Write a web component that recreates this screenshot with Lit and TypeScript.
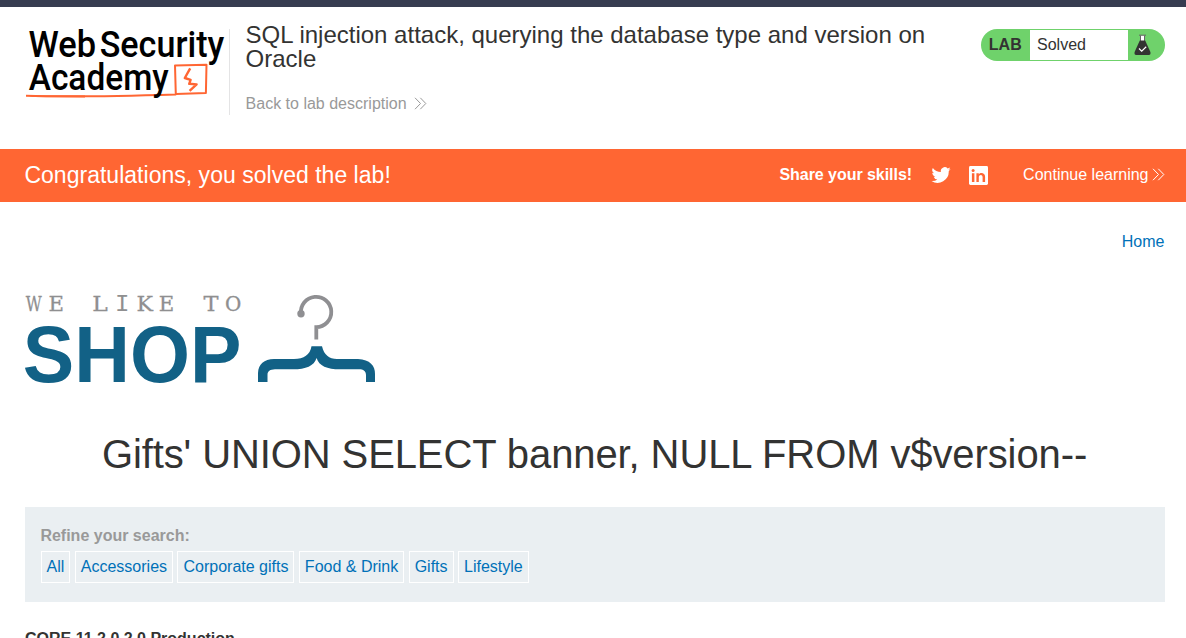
import { LitElement, html, css, svg } from "lit";
import { customElement } from "lit/decorators.js";

const CATEGORIES = ["All", "Accessories", "Corporate gifts", "Food & Drink", "Gifts", "Lifestyle"];

// letter, left edge, width
const TAGLINE: [string, number, number][] = [
  ["W", 0.7, 16], ["E", 23.5, 15.5], ["L", 67.3, 15.5], ["I", 90, 14.5],
  ["K", 111.5, 16.5], ["E", 133.8, 15.5], ["T", 178.5, 15], ["O", 200, 16.3],
];

@customElement("academy-logo")
export class AcademyLogo extends LitElement {
  static styles = css`
    :host { display: block; }
    svg { display: block; overflow: visible; }
    .word { font-family: Roboto, "Liberation Sans", sans-serif; font-size: 37.5px; font-weight: 500; fill: #000; }
    .orange { fill: none; stroke: #ff6633; stroke-linejoin: round; }
  `;
  render() {
    return html`<svg width="204" height="80" viewBox="0 0 204 80">
      <path class="orange" stroke-width="2" d="M1 70.8 C40 72 100 71 150.8 69.4 L150 40.4 L181.5 39.8 L180.9 68 L151 69" />
      <path fill="#ff6633" d="M1 70.2L60 70.5V72.4L8 72z" />
      <path class="orange" stroke-width="2.4" d="M165.2 43.3 L159.8 53 L165.6 54.9 L164.2 58.8 L171.6 59.4 L164.6 65.8" />
      <text class="word" x="3.5" y="32.3" textLength="67.5" lengthAdjust="spacingAndGlyphs">Web</text>
      <text class="word" x="74.7" y="32.3" textLength="124.5" lengthAdjust="spacingAndGlyphs">Security</text>
      <text class="word" x="3.7" y="64.8" textLength="140" lengthAdjust="spacingAndGlyphs">Academy</text>
    </svg>`;
  }
}

@customElement("shop-logo")
export class ShopLogo extends LitElement {
  static styles = css`
    :host { display: block; }
    svg { display: block; overflow: visible; }
    .tag { font-family: "DejaVu Serif", serif; font-size: 21px; fill: #8f8f90; stroke: #8f8f90; stroke-width: 0.3; }
    .mono { font-family: "Liberation Mono", monospace; font-size: 23.5px; stroke-width: 0; }
    .shop { font-family: "Liberation Sans", Arial, sans-serif; font-size: 80px; font-weight: 700; fill: #126186; }
  `;
  render() {
    return html`<svg width="352" height="92" viewBox="0 0 352 92">
      ${TAGLINE.map(([c, x, w]) => svg`<text class=${c === "I" ? "tag mono" : "tag"} x=${x} y="18" textLength=${w} lengthAdjust="spacingAndGlyphs">${c}</text>`)}
      <text class="shop" x="-2.2" y="88.8" textLength="218.6" lengthAdjust="spacingAndGlyphs">SHOP</text>
      <g fill="none" stroke="#8f8f92" stroke-width="3.8">
        <path d="M276 21 A15.2 15.2 0 1 1 291.3 34.2 V46.6" />
      </g>
      <circle cx="276" cy="20.7" r="3.7" fill="#8f8f92" />
      <path fill="#126186" d="M286.5 53.3H297C299 62 304 66 312 66H333C345 66.5 350.2 73 350 81V89H341V82C341 78 338 76 333 76.3H315C302 76.3 294 73 291.6 65C289 73 281 76.3 268 76.3H250C245 76.5 242.5 78 242.5 82V89H233V80C233.5 71 239 66.3 249 66H269C279 66 285 62 286.5 53.3Z" />
    </svg>`;
  }
}

@customElement("app-root")
export class AppRoot extends LitElement {
  static styles = css`
    :host { display: block; height: 638px; overflow: hidden; background: #fff; color: #333332;
      font: 16px/18px "Liberation Sans", Arial, sans-serif; }
    .topbar { height: 7px; background: #373c50; }
    .head { display: flex; align-items: flex-start; height: 142px; padding: 0 21px 0 25px; box-sizing: border-box; }
    .brand { margin-top: 18px; }
    .info { margin-top: 22px; height: 86px; padding-left: 15.6px; border-left: 1px solid #e4e4e5; box-sizing: border-box; width: 712px; }
    .title { margin: -6px 0 0; font-size: 24px; line-height: 24px; font-weight: 400; }
    .back { display: flex; align-items: center; gap: 7px; margin-top: 24px; color: #999; }
    .chev { display: block; margin-bottom: 1px; fill: none; stroke: currentColor; stroke-width: 1; }
    .status { display: flex; align-items: center; margin-left: auto; margin-top: 22px; width: 184px; height: 32px;
      border-radius: 16px; background: #6fd26b; box-sizing: border-box; overflow: hidden; }
    .lab { width: 49px; padding-left: 7.8px; box-sizing: border-box; font-weight: 700; }
    .solved { width: 98px; height: 30px; line-height: 30px; padding-left: 7px; box-sizing: border-box; background: #fff; }
    .flask { display: block; margin-left: 5.5px; }
    .banner { display: flex; align-items: center; height: 53px; padding: 0 21px 2px 24.4px; box-sizing: border-box; background: #ff6633; color: #fff; }
    .congrats { font-size: 23px; line-height: 28px; margin-right: auto; letter-spacing: 0.02px; }
    .share { font-weight: 700; letter-spacing: -0.04px; }
    .bird { margin-left: 18.5px; }
    .linked { margin: 2px 35px 0 18.5px; }
    .more { display: flex; align-items: center; gap: 3.5px; }
    .nav { display: flex; justify-content: flex-end; padding: 31px 21.5px 0 0; color: #0071b8; }
    .logo { padding: 42px 0 0 25px; }
    .query { margin: 45px 0 0; padding-left: 3px; text-align: center; font-size: 40px; line-height: 48px; font-weight: 400; letter-spacing: -0.1px; }
    .refine { margin: 29px 21px 0 25px; height: 95px; padding: 20px 15px 0 15.4px; box-sizing: border-box; background: #eaeff2; }
    .label { color: #999; font-weight: 700; }
    .cats { display: flex; gap: 4.45px; margin-top: 6px; padding-left: 0.2px; color: #0071b8; }
    .cat { height: 32px; line-height: 30px; padding: 0 5px; border: 1px solid #fff; box-sizing: border-box; }
    .row { margin: 28px 25px 0; font-weight: 700; }
  `;

  private chevrons() {
    return html`<svg class="chev" width="13" height="13" viewBox="0 0 13 13"><path d="M1 .8L6.5 6.5L1 12.2M6.3 .8L11.8 6.5L6.3 12.2" /></svg>`;
  }

  render() {
    return html`
      <div class="topbar"></div>
      <header class="head">
        <academy-logo class="brand"></academy-logo>
        <div class="info">
          <h2 class="title">SQL injection attack, querying the database type and version on Oracle</h2>
          <div class="back"><span>Back to lab description</span>${this.chevrons()}</div>
        </div>
        <div class="status">
          <span class="lab">LAB</span><span class="solved">Solved</span>
          <svg class="flask" width="17" height="22" viewBox="0 0 17 22">
            <path fill="#fff" d="M6.2 1.5h4.6v6H6.2z" />
            <path fill="none" stroke="#666" d="M5 1.2h7M6.5 1.5v6M10.5 1.5v6" />
            <path fill="#333332" d="M5.8 6.5H11.2L16.4 18Q17 21 14.8 21H2.2Q0 21 .6 18z" />
            <path fill="none" stroke="#fff" stroke-width="1.2" d="M5 14.5L7.7 17.2L12.2 12.8" />
          </svg>
        </div>
      </header>
      <section class="banner">
        <span class="congrats">Congratulations, you solved the lab!</span>
        <span class="share">Share your skills!</span>
        <svg class="bird" width="20" height="20" viewBox="0 0 24 24" fill="#fff"><path d="M23.6 4.9c-.85.4-1.75.65-2.7.75.97-.6 1.7-1.5 2.07-2.6-.9.54-1.92.93-3 1.14A4.7 4.7 0 0 0 11.9 8.5C8 8.3 4.5 6.4 2.2 3.5a4.75 4.75 0 0 0 1.45 6.3 4.7 4.7 0 0 1-2.13-.6c-.05 2.2 1.5 4.3 3.8 4.7-.68.2-1.4.22-2.13.08a4.75 4.75 0 0 0 4.4 3.3A9.6 9.6 0 0 1 .6 19.2a13.4 13.4 0 0 0 20.7-12C22.2 6.6 23 5.8 23.6 4.9z" /></svg>
        <svg class="linked" width="19" height="19" viewBox="0 0 19 19">
          <rect width="19" height="19" rx="1.4" fill="#fff" />
          <path fill="#ff6633" d="M2.9 7.2h2.5v8.9H2.9zM7.4 7.2H9.8v1.3c1.5-2.5 6.3-1.9 6.3 2.3v5.3h-2.5v-4.8c0-3.1-3.8-2.8-3.8 0v4.8H7.4z" />
          <circle cx="4.1" cy="4.4" r="1.5" fill="#ff6633" />
        </svg>
        <span class="more"><span>Continue learning</span>${this.chevrons()}</span>
      </section>
      <nav class="nav">Home</nav>
      <shop-logo class="logo"></shop-logo>
      <h1 class="query">Gifts' UNION SELECT banner, NULL FROM v$version--</h1>
      <section class="refine">
        <div class="label">Refine your search:</div>
        <div class="cats">${CATEGORIES.map((c) => html`<span class="cat">${c}</span>`)}</div>
      </section>
      <div class="row">CORE 11.2.0.2.0 Production</div>
    `;
  }
}
